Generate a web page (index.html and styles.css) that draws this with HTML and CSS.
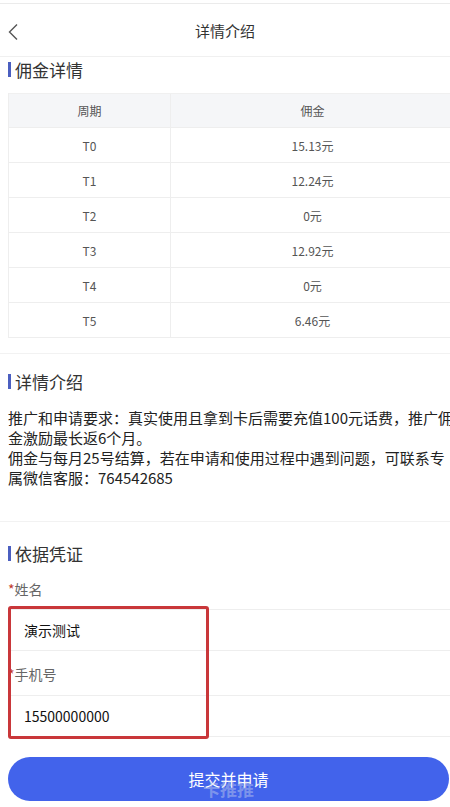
FILE: index.html
```html
<!DOCTYPE html>
<html lang="zh-CN">
<head>
    <meta charset="UTF-8">
    <meta name="viewport" content="width=device-width, initial-scale=1.0">
    <title>详情介绍</title>
    <link rel="stylesheet" href="styles.css">
</head>
<body>
<!--顶部-->
<div class="topLine"></div>
<div class="header">
    <div class="back">
        <svg width="12" height="18" viewBox="0 0 12 18">
            <path d="M10 1.5 L2.5 9 L10 16.5" fill="none" stroke="#555" stroke-width="1.4"/>
        </svg>
    </div>
    <div class="title">详情介绍</div>
</div>

<!--佣金详情-->
<div class="section first">
    <div class="sectionTitle">佣金详情</div>
    <div class="table">
        <div class="row head">
            <div class="cell c1">周期</div>
            <div class="cell c2">佣金</div>
        </div>
        <div class="row">
            <div class="cell c1">T0</div>
            <div class="cell c2">15.13元</div>
        </div>
        <div class="row">
            <div class="cell c1">T1</div>
            <div class="cell c2">12.24元</div>
        </div>
        <div class="row">
            <div class="cell c1">T2</div>
            <div class="cell c2">0元</div>
        </div>
        <div class="row">
            <div class="cell c1">T3</div>
            <div class="cell c2">12.92元</div>
        </div>
        <div class="row">
            <div class="cell c1">T4</div>
            <div class="cell c2">0元</div>
        </div>
        <div class="row">
            <div class="cell c1">T5</div>
            <div class="cell c2">6.46元</div>
        </div>
    </div>
</div>

<!--详情介绍-->
<div class="section intro">
    <div class="sectionTitle">详情介绍</div>
    <div class="text">
        <p>推广和申请要求：真实使用且拿到卡后需要充值100元话费，推广佣金激励最长返6个月。</p>
        <p>佣金与每月25号结算，若在申请和使用过程中遇到问题，可联系专属微信客服：764542685</p>
    </div>
</div>

<!--依据凭证-->
<div class="section proof">
    <div class="sectionTitle">依据凭证</div>
    <div class="form">
        <div class="label"><span class="star">*</span>姓名</div>
        <div class="field">演示测试</div>
        <div class="label"><span class="star">*</span>手机号</div>
        <div class="field">15500000000</div>
        <div class="mark"></div>
    </div>
    <div class="submit">
        <span>提交并申请</span>
        <span class="water">卡推推</span>
    </div>
</div>
</body>
</html>
```

FILE: styles.css
```css
* {
    margin: 0;
    padding: 0;
    box-sizing: border-box;
}

html, body {
    width: 450px;
    overflow: hidden;
    background: #fff;
}

body {
    font-family: "Noto Sans CJK SC", "Noto Sans", sans-serif;
    color: #333;
}

.topLine {
    height: 4px;
    border-bottom: 1px solid #ebebeb;
}

.header {
    height: 53px;
    display: flex;
    align-items: center;
    justify-content: center;
    position: relative;
    border-bottom: 1px solid #f0f0f0;
}

.header .title {
    font-size: 15px;
    color: #333;
}

.back {
    position: absolute;
    left: 7px;
    top: 18px;
}

.section {
    width: 462px;
    padding: 0 8px;
}

.sectionTitle {
    height: 26px;
    display: flex;
    align-items: center;
    font-size: 17px;
    color: #333;
}

.sectionTitle::before {
    content: "";
    width: 3px;
    height: 15px;
    background: #4b5fc0;
    margin-right: 4px;
}

/*佣金表格*/
.first .sectionTitle {
    height: 24px;
    margin-bottom: 12px;
}

.first {
    padding-bottom: 15px;
    border-bottom: 1px solid #f2f2f2;
}

.table {
    width: 446px;
    border-left: 1px solid #eeeeee;
}

.row {
    height: 35px;
    display: flex;
    border-bottom: 1px solid #eeeeee;
}

.row.head {
    background: #f5f6f8;
    border-top: 1px solid #f0f0f0;
}

.cell {
    display: flex;
    align-items: center;
    justify-content: center;
    font-size: 12px;
    color: #555;
}

.c1 {
    width: 162px;
    border-right: 1px solid #eeeeee;
}

.c2 {
    flex-grow: 1;
}

/*介绍*/
.intro {
    padding-top: 14px;
    padding-bottom: 33px;
    border-bottom: 1px solid #f2f2f2;
}

.intro .text {
    margin-top: 14px;
    width: 449px;
    font-size: 15px;
    line-height: 20px;
    color: #222;
}

/*凭证*/
.proof {
    padding-top: 18px;
}

.form {
    position: relative;
    border-bottom: 1px solid #eeeeee;
}

.label {
    height: 43px;
    display: flex;
    align-items: center;
    padding-top: 2px;
    font-size: 14px;
    color: #666;
}

.field + .label {
    height: 45px;
    border-top: 1px solid #eeeeee;
}

.star {
    color: #c0392b;
}

.field {
    height: 41px;
    display: flex;
    align-items: center;
    padding-left: 16px;
    font-size: 14px;
    color: #111;
    border-top: 1px solid #eeeeee;
}

.mark {
    position: absolute;
    left: 0;
    top: 40px;
    width: 201px;
    height: 133px;
    border: 3px solid #c9373a;
    border-radius: 3px;
}

.submit {
    position: relative;
    width: 441px;
    height: 44px;
    margin-top: 20px;
    border-radius: 22px;
    background: #4263eb;
    color: #fff;
    font-size: 16px;
    display: flex;
    align-items: center;
    justify-content: center;
}

.submit .water {
    position: absolute;
    left: 50%;
    top: 19px;
    transform: translateX(-50%);
    font-size: 17px;
    font-weight: bold;
    color: rgba(200, 210, 235, 0.45);
}
```
